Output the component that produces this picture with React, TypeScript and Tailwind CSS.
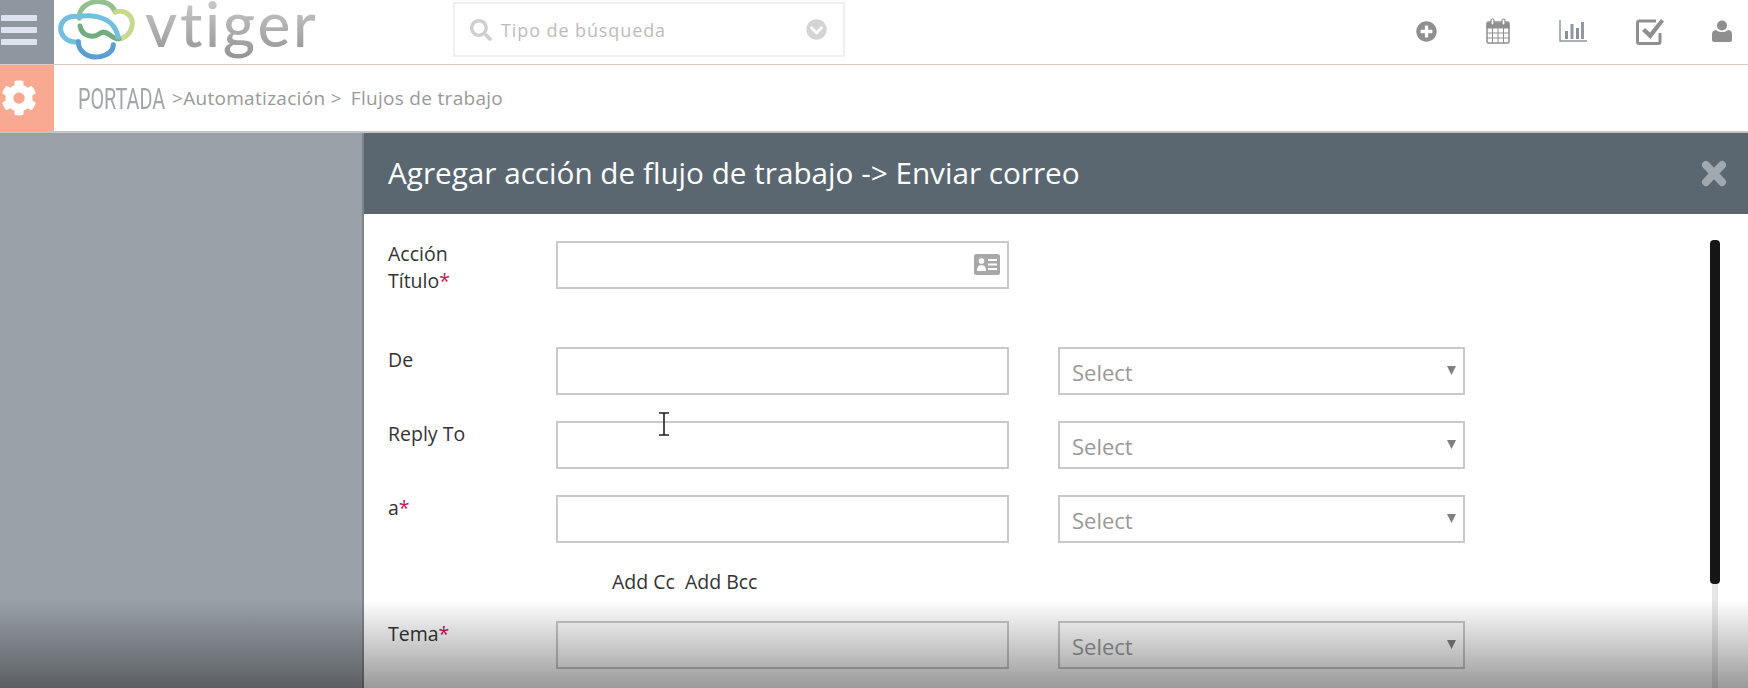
import React from 'react';
import { FaChevronCircleDown, FaCog, FaPlusCircle, FaSearch } from 'react-icons/fa';

const CloudLogo = () => (
  <svg className="w-[90px] h-[64px] shrink-0 -ml-[4px]" viewBox="0 0 270 192" fill="none" strokeWidth="15" strokeLinecap="round">
    <path d="M88 55C85 22 118 3 150 5C174 7 190 20 196 36" stroke="#94bf8f" />
    <path d="M196 36C226 26 252 50 246 78C241 104 222 116 206 116" stroke="#c5d98f" />
    <path d="M90 78C96 110 130 116 150 100C170 84 188 122 206 116" stroke="#72ad80" />
    <path d="M85 125C52 130 30 106 32 82C35 58 60 44 86 50C120 42 170 50 190 78C198 90 204 100 204 112" stroke="#72bfe0" />
    <path d="M85 125C85 158 120 176 150 170C174 166 190 152 190 134" stroke="#5b9fd0" />
  </svg>
);

const CalendarIcon = () => (
  <svg className="w-[24px] h-[26px]" viewBox="0 0 24 26" fill="none" stroke="#8f8f8f">
    <rect x="1" y="4" width="22" height="21" rx="1.5" strokeWidth="1.5" />
    <path d="M1 5h22v5H1z" fill="#8f8f8f" />
    <path d="M1 15h22M1 20h22M6.5 10v15M12 10v15M17.5 10v15" strokeWidth="1" />
    <rect x="5" y="1" width="3" height="6" rx="1.5" fill="#fff" strokeWidth="1.2" />
    <rect x="16" y="1" width="3" height="6" rx="1.5" fill="#fff" strokeWidth="1.2" />
  </svg>
);

const ChartIcon = () => (
  <svg className="w-[28px] h-[24px]" viewBox="0 0 28 24">
    <path d="M1 1v21h27" fill="none" stroke="#8f98a3" strokeWidth="1.5" />
    <rect x="6" y="12" width="3" height="8" fill="#8f8f8f" />
    <rect x="11.5" y="5" width="3" height="15" fill="#8f98a3" />
    <rect x="17" y="9" width="3" height="11" fill="#8f8f8f" />
    <rect x="22" y="3" width="3" height="17" fill="#8f98a3" />
  </svg>
);

const CheckIcon = () => (
  <svg className="w-[28px] h-[27px]" viewBox="0 0 28 27">
    <path d="M20 3H3a1.5 1.5 0 0 0-1.5 1.500V24a1.500 1.500 0 0 0 1.500 1.500h19.500A1.500 1.500 0 0 0 24 24v-9" fill="none" stroke="#8f8f8f" strokeWidth="3" />
    <path d="M6 13l3-3 5 4.500L25 1l3 2.500L14.500 21z" fill="#8f8f8f" />
  </svg>
);

const UserIcon = () => (
  <svg className="w-[20px] h-[22px]" viewBox="0 0 20 22" fill="#8f8f8f">
    <circle cx="10" cy="5.500" r="5" />
    <path d="M0 14c0-2.500 2-4 4-4 1.500 1.500 3.500 2 6 2s4.500-.5 6-2c2 0 4 1.500 4 4v6c0 1.200-1 2-2 2H2c-1 0-2-.8-2-2z" />
  </svg>
);

const CardIcon = () => (
  <svg className="absolute right-[9px] top-[13px] w-[26px] h-[21px]" viewBox="0 0 26 21">
    <rect width="26" height="21" rx="2.500" fill="#a8a8a8" />
    <circle cx="7.500" cy="7" r="2.800" fill="#fff" />
    <path d="M3 17c0-4 1.500-6 4.500-6s4.500 2 4.500 6z" fill="#fff" />
    <path d="M14 6h9M14 10.500h9M14 15h9" stroke="#fff" strokeWidth="2" />
  </svg>
);

const CloseIcon = () => (
  <svg className="w-[26px] h-[27px]" viewBox="0 0 26 27" fill="none" stroke="#a0a8b0" strokeWidth="8" strokeLinecap="round">
    <path d="M5 5l16 17M21 5L5 22" />
  </svg>
);

const CursorIcon = () => (
  <svg className="absolute left-[657px] top-[412px] w-[14px] h-[24px]" viewBox="0 0 14 24" fill="none" stroke="#222" strokeWidth="1.6">
    <path d="M2 1h10M2 23h10M7 1v22" />
  </svg>
);

const FieldLabel = ({ children, required }: { children: React.ReactNode; required?: boolean }) => (
  <div className="w-[168px] h-[48px] shrink-0 -mt-[1px] text-[19.5px] leading-[27px] text-[#333]">
    {children}
    {required && <span className="text-[#c2185b]">*</span>}
  </div>
);

const SelectBox = () => (
  <div className="ml-[49px] w-[407px] h-[48px] border-2 border-[#c9c9c9] bg-white flex items-center justify-between pl-[12px] pr-[7px]">
    <span className="text-[22px] leading-[30px] pt-[1px] text-[#999]">Select</span>
    <svg className="w-[9px] h-[9px] -mt-[1px]" viewBox="0 0 9 9" fill="#808080">
      <path d="M0 0h9L4.500 9z" />
    </svg>
  </div>
);

const TextInput = () => (
  <input readOnly className="w-[453px] h-[48px] border-2 border-[#c9c9c9] bg-white outline-none" />
);

const App = () => {
  return (
    <div className="relative w-[1748px] h-[688px] overflow-hidden bg-white flex flex-col font-['Open_Sans',sans-serif]">
      {/* Top bar */}
      <div className="h-[65px] shrink-0 flex border-b border-[#e0c8be]">
        <div className="w-[54px] bg-[#8e96a0] flex flex-col gap-[6px] pt-[15px] pl-[1px]">
          <div className="w-[36px] h-[6px] rounded-[1px] bg-[#dde3ee]" />
          <div className="w-[36px] h-[6px] rounded-[1px] bg-[#dde3ee]" />
          <div className="w-[36px] h-[6px] rounded-[1px] bg-[#dde3ee]" />
        </div>
        <div className="relative z-10 w-[399px] flex items-start">
          <CloudLogo />
          <span className="ml-[5px] font-['Lato',sans-serif] font-medium text-[62px] leading-[46px] pb-[18px] tracking-[2.7px] bg-gradient-to-b from-[#c9c9c9] to-[#8f8f8f] bg-clip-text text-transparent">
            vtiger
          </span>
        </div>
        <div className="w-[392px] h-[55px] mt-[2px] border-2 border-[#f0f0f0] flex items-center pl-[15px] pr-[16px]">
          <FaSearch className="w-[22px] h-[22px] text-[#cfcfcf]" />
          <span className="ml-[9px] pt-[2px] text-[18px] tracking-[0.9px] text-[#bcbcbc]">Tipo de búsqueda</span>
          <FaChevronCircleDown className="ml-auto w-[21px] h-[21px] text-[#d4d4d4]" />
        </div>
        <div className="flex-1 flex items-center pl-[571px] -mt-[2px]">
          <FaPlusCircle className="w-[21px] h-[21px] text-[#8f8f8f]" />
          <div className="ml-[49px]"><CalendarIcon /></div>
          <div className="ml-[49px]"><ChartIcon /></div>
          <div className="ml-[49px]"><CheckIcon /></div>
          <div className="ml-[48px]"><UserIcon /></div>
        </div>
      </div>

      {/* Breadcrumb */}
      <div className="h-[68px] shrink-0 flex border-b-2 border-[#c4c4c4]">
        <div className="w-[54px] bg-[#f9a892] flex items-center pl-[1px]">
          <FaCog className="w-[36px] h-[36px] text-white" />
        </div>
        <div className="flex-1 flex items-center pl-[24px] text-[19px] tracking-[0.3px] text-[#999]">
          <span className="w-[94px] font-['Roboto',sans-serif] font-normal text-[30px] tracking-normal text-[#a0a6ab] whitespace-nowrap origin-left scale-x-[0.66]">PORTADA</span>
          <span>&gt;Automatización &gt;</span>
          <span className="ml-[9px]">Flujos de trabajo</span>
        </div>
      </div>

      <div className="flex-1 flex min-h-0">
        <div className="w-[364px] shrink-0 bg-[#99a0a7] border-r-2 border-[#7e848b]" />

        {/* Modal */}
        <div className="flex-1 flex flex-col bg-white">
          <div className="h-[81px] shrink-0 bg-[#5a6771] flex items-center justify-between pl-[24px] pr-[21px]">
            <span className="text-[29.7px] text-white">Agregar acción de flujo de trabajo -&gt; Enviar correo</span>
            <CloseIcon />
          </div>

          <div className="pl-[24px] pt-[27px]">
            <div className="flex">
              <FieldLabel required>Acción<br />Título</FieldLabel>
              <div className="relative w-[453px]">
                <TextInput />
                <CardIcon />
              </div>
            </div>
            <div className="flex mt-[58px]">
              <FieldLabel>De</FieldLabel>
              <TextInput />
              <SelectBox />
            </div>
            <div className="flex mt-[26px]">
              <FieldLabel>Reply To</FieldLabel>
              <TextInput />
              <SelectBox />
            </div>
            <div className="flex mt-[26px]">
              <FieldLabel required>a</FieldLabel>
              <TextInput />
              <SelectBox />
            </div>
            <div className="flex gap-[10px] ml-[224px] mt-[25px] h-[53px] text-[19.5px] leading-[27px] text-[#333]">
              <span>Add Cc</span>
              <span>Add Bcc</span>
            </div>
            <div className="flex">
              <FieldLabel required>Tema</FieldLabel>
              <TextInput />
              <SelectBox />
            </div>
          </div>
        </div>
      </div>

      {/* Scrollbar */}
      <div className="absolute left-[1712px] top-[584px] w-[6px] h-[104px] bg-[#e6e6e6]" />
      <div className="absolute left-[1710px] top-[240px] w-[10px] h-[344px] rounded-[4px] bg-[#151515]" />

      <CursorIcon />

      {/* Fade over the bottom of the page */}
      <div className="absolute left-0 right-0 bottom-0 h-[88px] bg-gradient-to-b from-black/0 to-black/40 pointer-events-none" />
    </div>
  );
};

export default App;
